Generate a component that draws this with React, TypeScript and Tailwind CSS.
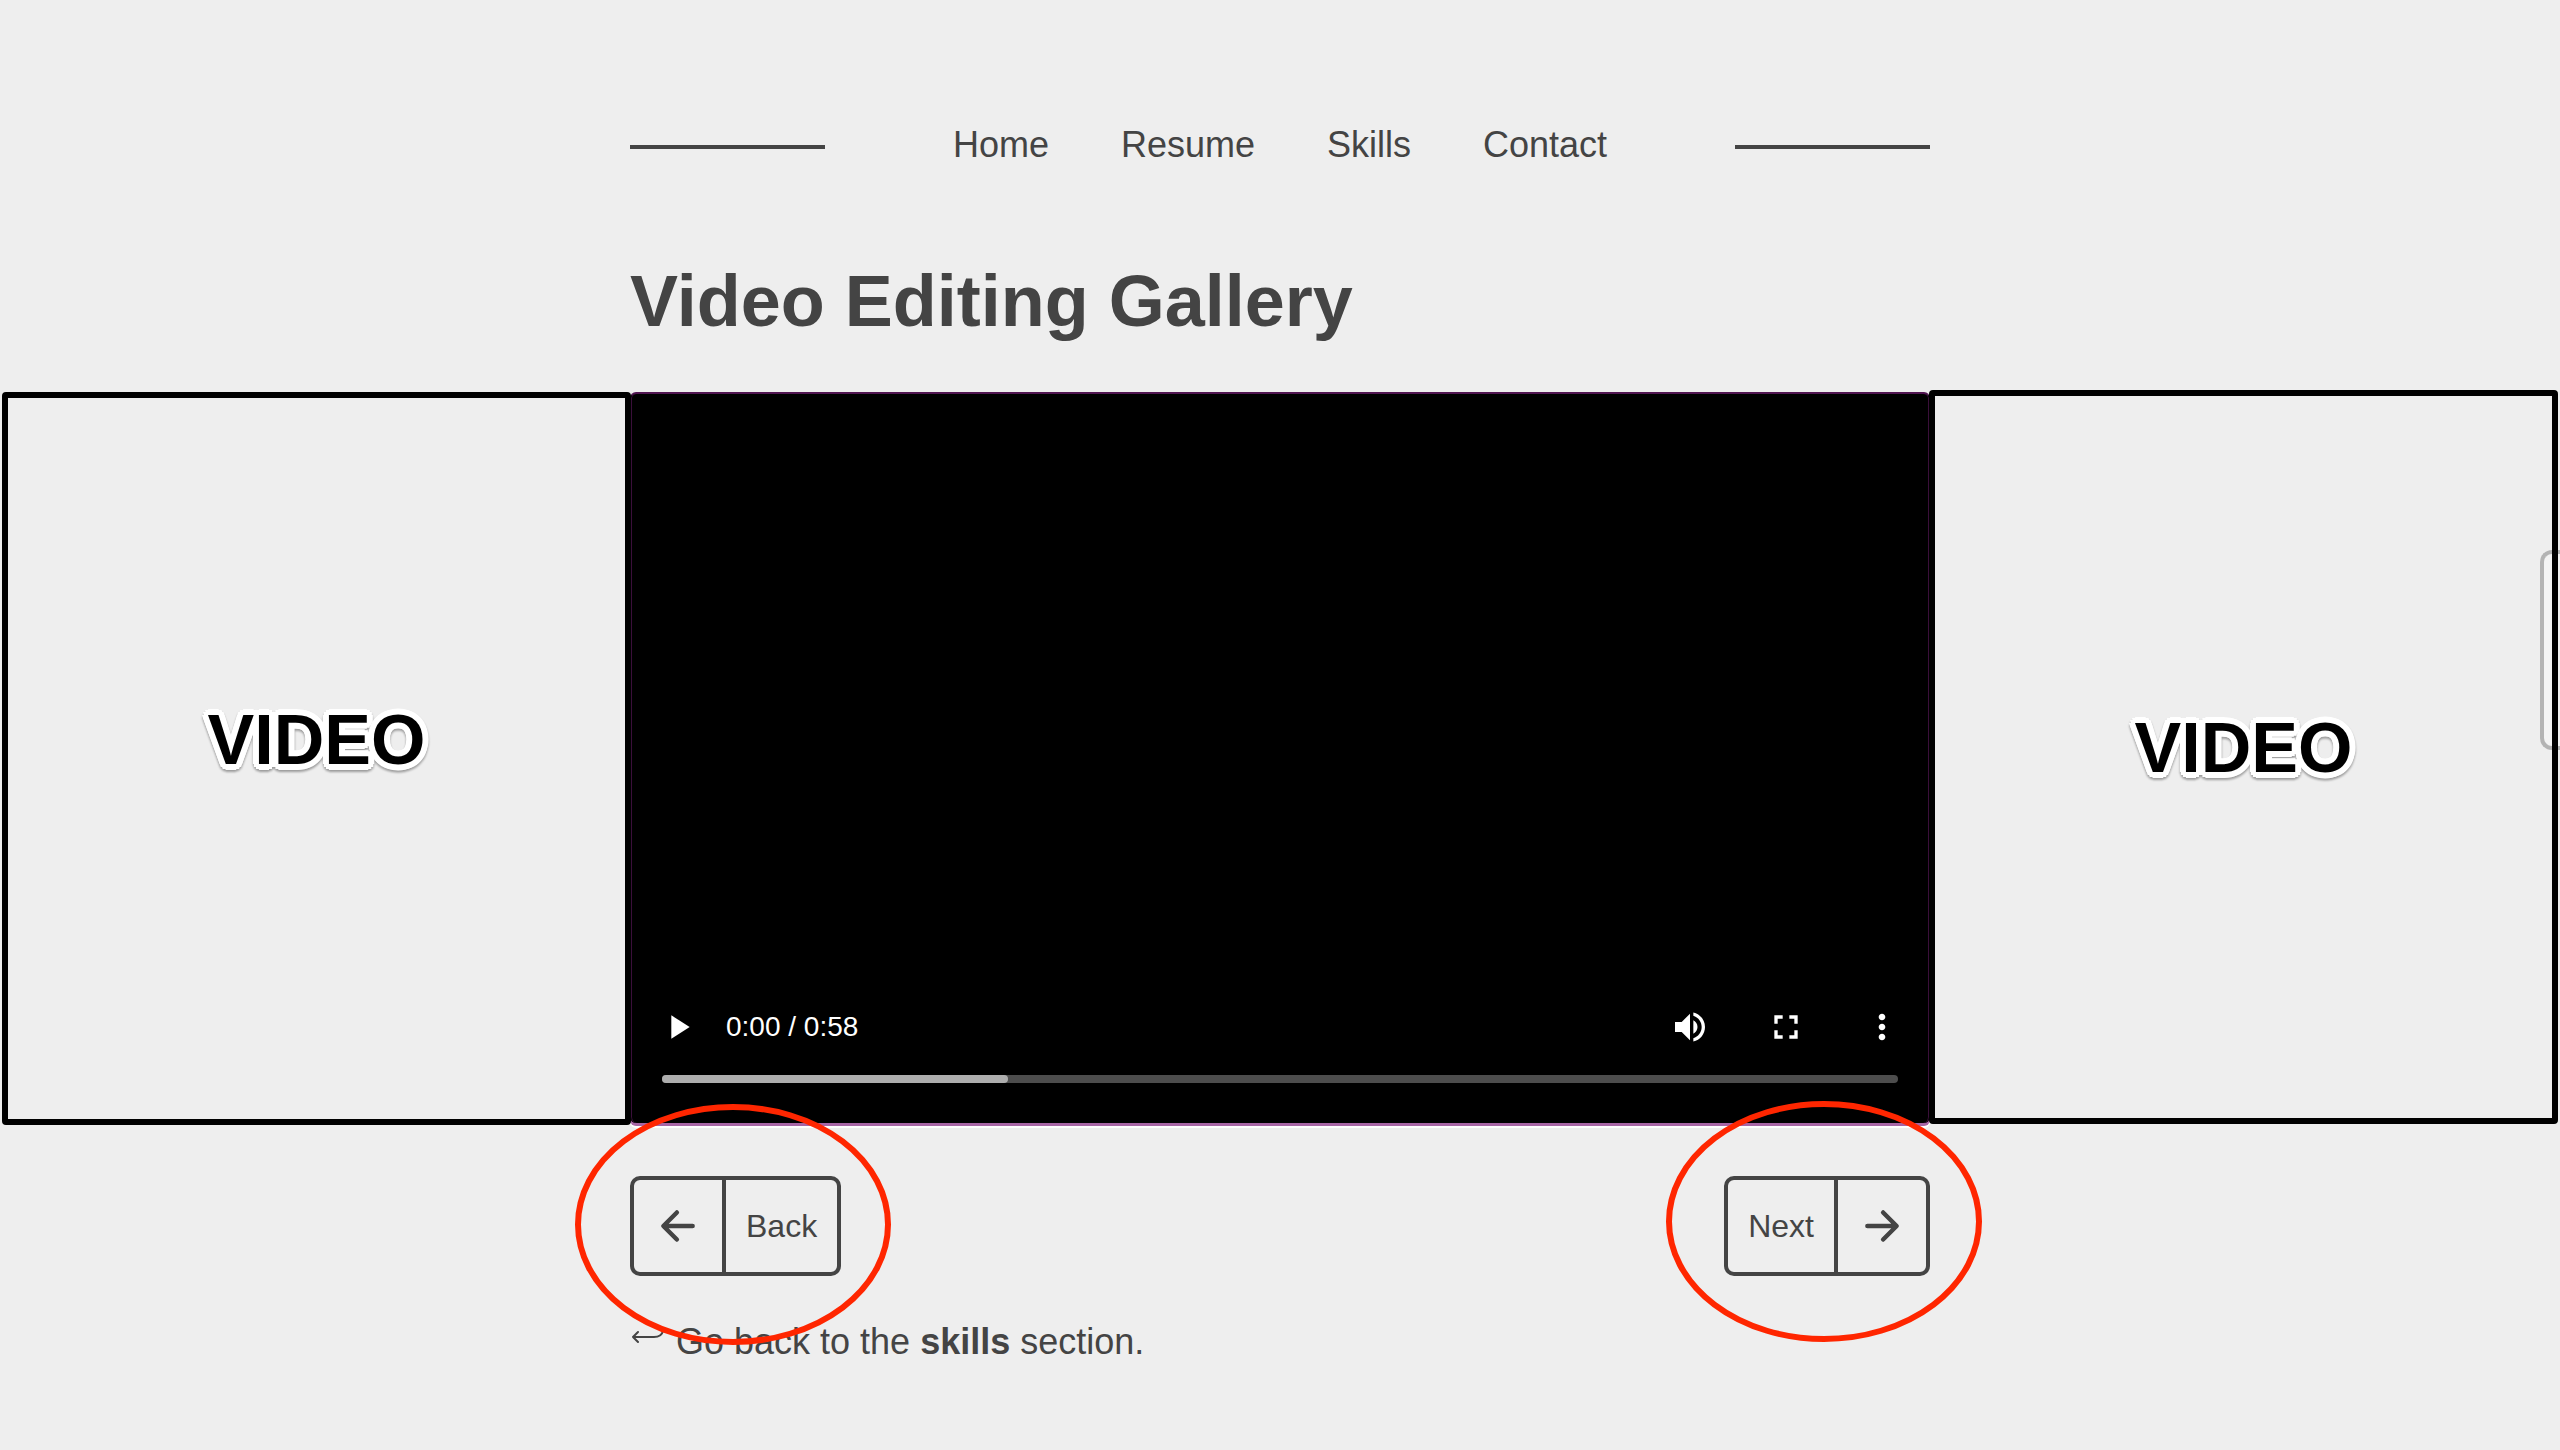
import { useState } from "react";

const links = ["Home", "Resume", "Skills", "Contact"];

function Placeholder({ className }: { className: string }) {
  return (
    <div className={`relative z-10 flex justify-center rounded-sm border-6 border-black ${className}`}>
      <span className="text-[70px] leading-[80px] font-bold text-black drop-shadow-[0_2px_1px_rgba(0,0,0,0.35)] [text-shadow:6px_0_#fff,5px_3px_#fff,3px_5px_#fff,0_6px_#fff,-3px_5px_#fff,-5px_3px_#fff,-6px_0_#fff,-5px_-3px_#fff,-3px_-5px_#fff,0_-6px_#fff,3px_-5px_#fff,5px_-3px_#fff]">
        VIDEO
      </span>
    </div>
  );
}

function Arrow({ forward = false }: { forward?: boolean }) {
  return (
    <svg viewBox="0 0 512 512" className="size-12" fill="none" stroke="currentColor" strokeWidth="48" strokeLinecap="round" strokeLinejoin="round" aria-hidden="true">
      {forward ? (
        <path d="M268 112l144 144-144 144M392 256H100" />
      ) : (
        <path d="M244 400L100 256l144-144M120 256h292" />
      )}
    </svg>
  );
}

function Player() {
  const [time, setTime] = useState(0);
  const icon = "size-10 text-white";
  return (
    <section aria-label="Video player" className="flex aspect-video flex-col justify-end rounded-md border-x border-t-2 border-x-black border-t-[#511551] bg-black px-[31px] pb-10 shadow-[inset_1px_0_#3a0f3a,inset_-1px_0_#3a0f3a,0_3px_0_#a765a5,0_5px_0_#fff]">
      <div className="flex items-center pb-7">
        <button type="button" aria-label="Play" className="-ml-1">
          <svg viewBox="0 0 24 24" className={icon} fill="currentColor"><path d="M8 5v14l11-7z" /></svg>
        </button>
        <span className="ml-7 text-[28px] leading-10 text-white">0:00 / 0:58</span>
        <div className="-mr-1 ml-auto flex gap-14">
          <button type="button" aria-label="Mute">
            <svg viewBox="0 0 24 24" className={icon} fill="currentColor"><path d="M3 9v6h4l5 5V4L7 9H3zm13.5 3c0-1.770-1-3.290-2.500-4.030v8.050c1.500-.730 2.500-2.250 2.500-4.020zM14 3.230v2.060c2.890.860 5 3.540 5 6.710s-2.110 5.850-5 6.710v2.060c4.010-.910 7-4.490 7-8.770s-2.990-7.860-7-8.770z" /></svg>
          </button>
          <button type="button" aria-label="Full screen">
            <svg viewBox="0 0 24 24" className={icon} fill="currentColor"><path d="M7 14H5v5h5v-2H7v-3zm-2-4h2V7h3V5H5v5zm12 7h-3v2h5v-5h-2v3zM14 5v2h3v3h2V5h-5z" /></svg>
          </button>
          <button type="button" aria-label="More options">
            <svg viewBox="0 0 24 24" className={icon} fill="currentColor"><path d="M12 8c1.100 0 2-.9 2-2s-.9-2-2-2-2 .9-2 2 .9 2 2 2zm0 2c-1.100 0-2 .9-2 2s.9 2 2 2 2-.9 2-2-.9-2-2-2zm0 6c-1.100 0-2 .9-2 2s.9 2 2 2 2-.9 2-2-.9-2-2-2z" /></svg>
          </button>
        </div>
      </div>
      <div className="relative h-2 rounded-full bg-[#4d4d4d]">
        <div className="h-2 w-[28%] rounded-full bg-[#adadad]" />
        <input type="range" aria-label="Seek" min={0} max={58} value={time} onChange={(e) => setTime(Number(e.target.value))} className="absolute inset-0 h-2 w-full opacity-0" />
      </div>
    </section>
  );
}

function Ring({ className }: { className: string }) {
  return (
    <svg viewBox="0 0 316 241" className={`pointer-events-none absolute h-[241px] w-[316px] max-w-none ${className}`} aria-hidden="true">
      <ellipse cx="158" cy="120.500" rx="155" ry="117.500" fill="none" stroke="#ff2600" strokeWidth="6" />
    </svg>
  );
}

export default function App() {
  return (
    <div className="relative min-h-screen overflow-hidden bg-[#eee] font-['Liberation_Sans',Arial,sans-serif] text-[36px] leading-[48px] text-[#444]">
      <header className="mx-auto flex max-w-[1300px] items-center justify-between pt-[121px]">
        <div className="h-1 w-[15%] bg-[#444]" />
        <nav className="flex gap-[72px] pb-1">
          {links.map((l) => (
            <a key={l} href={`#${l.toLowerCase()}`}>{l}</a>
          ))}
        </nav>
        <div className="h-1 w-[15%] bg-[#444]" />
      </header>
      <main>
        <h1 className="mx-auto max-w-[1300px] pt-[84px] text-[72px] leading-[88px] font-bold">Video Editing Gallery</h1>
        <div className="absolute top-[550px] right-0 h-[200px] w-5 rounded-l-xl border-4 border-r-0 border-[#b3b3b3] bg-[#f3f3f3]" />
        <div className="mt-[47px] grid grid-cols-[1fr_minmax(0,1300px)_1fr]">
          <Placeholder className="-mr-px -mb-0.5 ml-0.5 pt-[302px]" />
          <Player />
          <Placeholder className="-mt-0.5 mr-0.5 -mb-px -ml-px pt-[312px]" />
        </div>
        <div className="mx-auto max-w-[1300px] pt-[53px]">
          <div className="flex justify-between text-[32px]">
            <div className="relative">
              <button type="button" className="flex h-[100px] items-stretch rounded-[10px] border-4 border-[#444]">
                <span className="flex items-center border-r-4 border-[#444] px-5"><Arrow /></span>
                <span className="flex items-center px-5">Back</span>
              </button>
              <Ring className="-top-[72px] -left-[55px]" />
            </div>
            <div className="relative">
              <button type="button" className="flex h-[100px] items-stretch rounded-[10px] border-4 border-[#444]">
                <span className="flex items-center border-r-4 border-[#444] px-5">Next</span>
                <span className="flex items-center px-5"><Arrow forward /></span>
              </button>
              <Ring className="-top-[75px] -left-[58px]" />
            </div>
          </div>
          <p className="flex items-center pt-[42px]">
            <svg viewBox="0 0 36 24" className="mr-[10px] h-6 w-9" fill="none" stroke="currentColor" strokeWidth="2" strokeLinecap="round" strokeLinejoin="round" aria-hidden="true">
              <path d="M8 2L3 7l5 5M3 7h21c5 0 8-2 9-6" />
            </svg>
            <span>Go back to the <a href="#skills" className="font-bold">skills</a> section.</span>
          </p>
        </div>
      </main>
    </div>
  );
}
